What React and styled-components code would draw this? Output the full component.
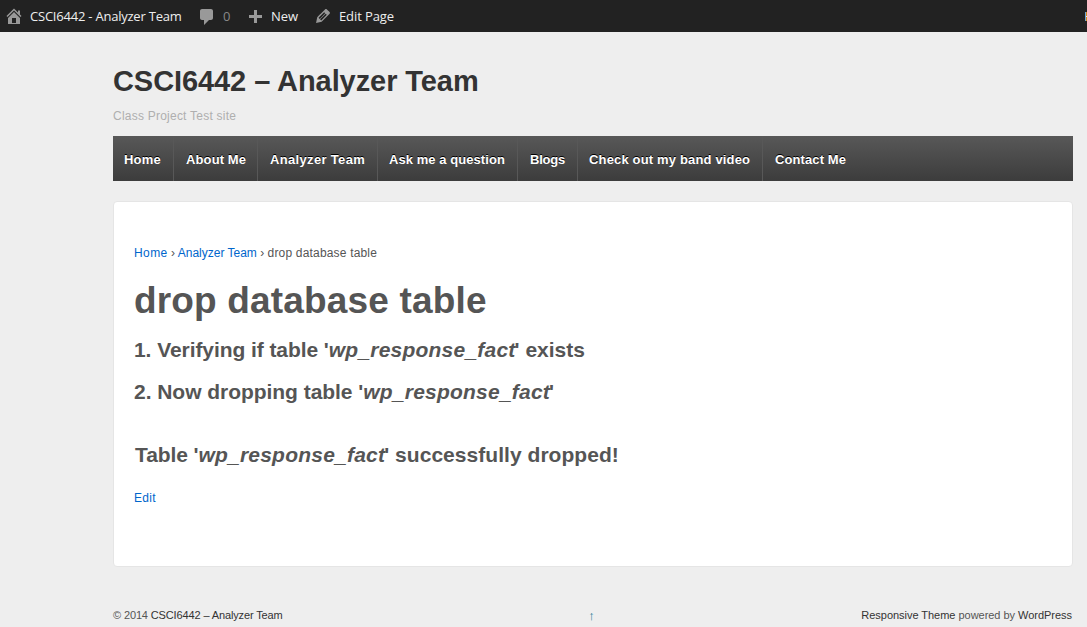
import React from "react";
import styled, { createGlobalStyle } from "styled-components";

const GlobalStyle = createGlobalStyle`
  *, *::before, *::after { box-sizing: border-box; }
  html, body { margin: 0; padding: 0; background: #eee; }
  body {
    height: 627px;
    overflow: hidden;
    color: #555;
    font-family: Arial, "Liberation Sans", sans-serif;
    font-size: 12px;
  }
  h1, h2, h3, p { margin: 0; }
  a { text-decoration: none; color: #0066cc; }
`;

const AdminBar = styled.header`
  display: flex;
  height: 32px;
  padding-left: 4px;
  background: #222;
  color: #eee;
  font: 13px/32px "Open Sans", sans-serif;
`;

const AdminItem = styled.a`
  display: flex;
  flex: none;
  width: ${(p) => p.$width}px;
  color: ${(p) => (p.$muted ? "#888" : "#eee")};
  letter-spacing: ${(p) => p.$spacing || 0}px;
  white-space: nowrap;
`;

const Dashicon = styled.svg`
  flex: none;
  width: 20px;
  height: 20px;
  margin: ${(p) => p.$top}px ${(p) => p.$gap}px 0 0;
  fill: #999;
`;

const BarEdge = styled.svg`
  width: 2px;
  height: 9px;
  margin: 12px 0 0 auto;
`;

const Page = styled.div`
  width: 960px;
  margin-left: 113px;
`;

const SiteHeader = styled.div`
  height: 104px;
  padding-top: 33px;
`;

const SiteName = styled.h2`
  color: #333;
  font-size: 29px;
  line-height: 33px;
  white-space: nowrap;
  letter-spacing: -0.08px;
`;

const Tagline = styled.p`
  margin-top: 10px;
  color: #afafaf;
  font-size: 12px;
  line-height: 16px;
  letter-spacing: 0.23px;
`;

const Nav = styled.nav`
  display: flex;
  height: 45px;
  background: linear-gradient(#585858, #3c3c3c);
`;

const NavLink = styled.a`
  flex: none;
  width: ${(p) => p.$width}px;
  padding-left: ${(p) => p.$pad}px;
  border-right: ${(p) => (p.$last ? "none" : "1px solid #585858")};
  color: #fff;
  font-size: 13px;
  font-weight: 700;
  line-height: 48px;
  letter-spacing: ${(p) => p.$spacing}px;
  text-shadow: 0 -1px 0 #000;
  white-space: nowrap;
`;

const Content = styled.main`
  height: 366px;
  margin-top: 20px;
  padding: 43px 20px 0;
  border: 1px solid #e5e5e5;
  border-radius: 4px;
  background: #fff;
`;

const Breadcrumb = styled.div`
  line-height: 16px;
`;

const Crumb = styled.a`
  color: ${(p) => (p.$current ? "#555" : "#0066cc")};
  letter-spacing: ${(p) => p.$spacing}px;
`;

const Title = styled.h1`
  margin: 18px 0 0;
  font-size: 37px;
  line-height: 44px;
  letter-spacing: 0.17px;
`;

const Step = styled.h3`
  margin: ${(p) => p.$top}px 0 0 ${(p) => p.$left || 0}px;
  font-size: 21px;
  line-height: 24px;
  white-space: nowrap;
`;

const Lead = styled.span`
  letter-spacing: ${(p) => p.$spacing}px;
`;

const TableName = styled.em`
  margin-right: -1px;
  letter-spacing: 0.22px;
`;

const EditLink = styled.a`
  display: block;
  margin-top: 23px;
  line-height: 16px;
  letter-spacing: 0.3px;
`;

const Footer = styled.footer`
  display: grid;
  grid-template-columns: 1fr auto 1fr;
  margin-top: 40px;
  font-size: 11px;
  line-height: 16px;
  a { color: #333; }
`;

const Copyright = styled.div`
  letter-spacing: -0.13px;
`;

const Credit = styled.div`
  padding-right: 1px;
  text-align: right;
  letter-spacing: -0.03px;
`;

const TopLink = styled.span`
  padding: 1px 3px 0 0;
  color: #2a7f96;
  font-size: 13px;
`;

const links = [
  { label: "Home", width: 61, pad: 11, spacing: 0.2 },
  { label: "About Me", width: 84, pad: 12, spacing: 0.12 },
  { label: "Analyzer Team", width: 120, pad: 12, spacing: 0.33 },
  { label: "Ask me a question", width: 140, pad: 11, spacing: 0.06 },
  { label: "Blogs", width: 60, pad: 12, spacing: -0.2 },
  { label: "Check out my band video", width: 185, pad: 11, spacing: 0.16 },
  { label: "Contact Me", width: 100, pad: 12, spacing: 0.1 },
];

const icons = {
  home: "M16 8.5l1.53 1.53-1.06 1.06L10 4.6l-6.47 6.49-1.06-1.06L10 2.5l4 4v-2h2v4zm-6-2.46l6 5.99V18H4v-5.97zM12 17v-5H8v5h4z",
  comment: "M5 2h9c1.1 0 2 .9 2 2v7c0 1.1-.9 2-2 2h-2l-5 5v-5H5c-1.1 0-2-.9-2-2V4c0-1.1.9-2 2-2z",
  plus: "M17 7v3h-5v5H9v-5H4V7h5V2h3v5h5z",
  edit: "M13.89 3.39l2.71 2.72c.46.46.42 1.24.03 1.64l-8.01 8.02-5.56 1.16 1.16-5.58s7.6-7.63 7.99-8.03c.39-.39 1.22-.39 1.68.07zm-2.73 2.79l-5.59 5.61 1.11 1.11 5.54-5.65zm-2.97 8.23l5.58-5.6-1.07-1.08-5.59 5.6z",
};

const Icon = ({ name, top, gap }) => (
  <Dashicon viewBox="0 0 20 20" $top={top} $gap={gap}>
    <path d={icons[name]} />
  </Dashicon>
);

export default function App() {
  return (
    <>
      <GlobalStyle />
      <AdminBar>
        <AdminItem $width={193} $spacing={-0.22}><Icon name="home" top={6} gap={6} />CSCI6442 - Analyzer Team</AdminItem>
        <AdminItem $width={48} $muted><Icon name="comment" top={7} gap={6} />0</AdminItem>
        <AdminItem $width={68}><Icon name="plus" top={8} gap={6} />New</AdminItem>
        <AdminItem $width={100} $spacing={-0.1}><Icon name="edit" top={6} gap={6} />Edit Page</AdminItem>
        <BarEdge viewBox="0 0 2 9" shapeRendering="crispEdges">
          <rect width="1" height="9" fill="#6ea5d2" />
          <rect x="1" width="1" height="9" fill="#d68a1c" />
          <rect x="1" y="4" width="1" height="1" fill="#eee" />
        </BarEdge>
      </AdminBar>
      <Page>
        <SiteHeader>
          <SiteName>CSCI6442 – Analyzer Team</SiteName>
          <Tagline>Class Project Test site</Tagline>
        </SiteHeader>
        <Nav>
          {links.map(({ label, width, pad, spacing }, i) => (
            <NavLink key={label} $width={width} $pad={pad} $spacing={spacing} $last={i === links.length - 1}>
              {label}
            </NavLink>
          ))}
        </Nav>
        <Content>
          <Breadcrumb>
            <Crumb $spacing={0.42}>Home</Crumb> › <Crumb $spacing={0}>Analyzer Team</Crumb> ›{" "}
            <Crumb as="span" $current $spacing={0.18}>drop database table</Crumb>
          </Breadcrumb>
          <Title>drop database table</Title>
          <Step $top={15}>
            <Lead $spacing={-0.07}>1. Verifying if table '</Lead><TableName>wp_response_fact</TableName>' exists
          </Step>
          <Step $top={18}>
            <Lead $spacing={-0.04}>2. Now dropping table '</Lead><TableName>wp_response_fact</TableName>'
          </Step>
          <Step $top={39} $left={1}>
            <Lead $spacing={-0.1}>Table '</Lead><TableName>wp_response_fact</TableName>
            <Lead $spacing={0.04}>' successfully dropped!</Lead>
          </Step>
          <EditLink>Edit</EditLink>
        </Content>
        <Footer>
          <Copyright>© 2014 <a>CSCI6442 – Analyzer Team</a></Copyright>
          <TopLink>↑</TopLink>
          <Credit><a>Responsive Theme</a> powered by <a>WordPress</a></Credit>
        </Footer>
      </Page>
    </>
  );
}
